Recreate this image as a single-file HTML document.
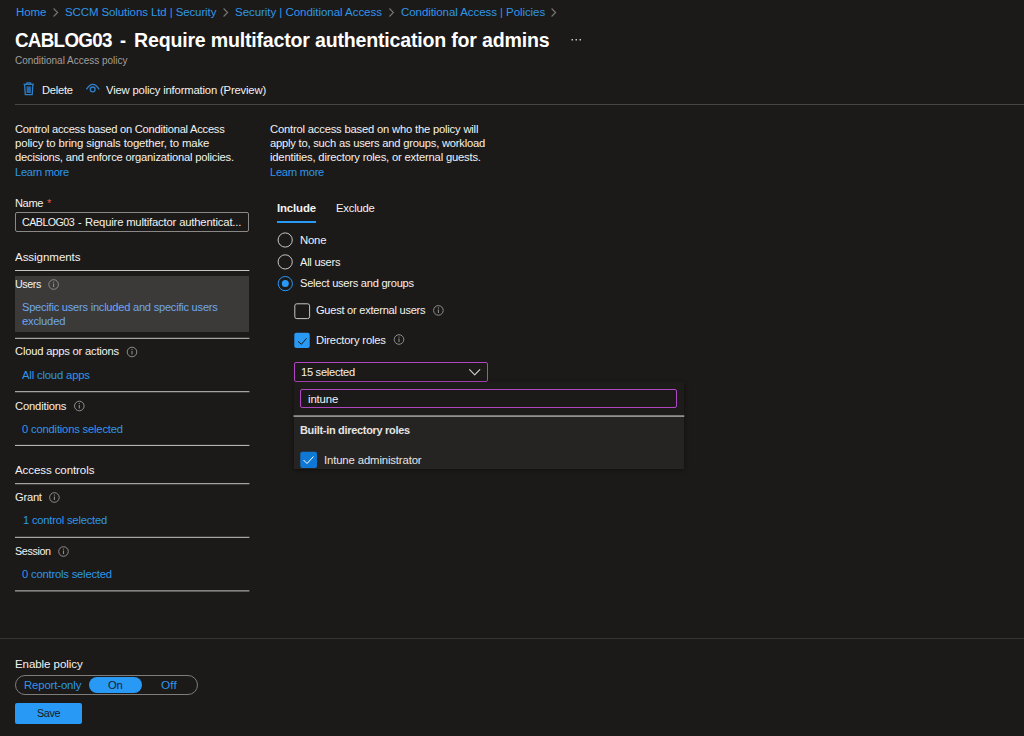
<!DOCTYPE html>
<html><head><meta charset="utf-8"><title>CABLOG03</title>
<style>
html,body{margin:0;padding:0;width:1024px;height:736px;overflow:hidden;background:#1b1a19;}
body{position:relative;font-family:"Liberation Sans",sans-serif;}
.t{position:absolute;white-space:nowrap;transform-origin:0 0;}
.a{position:absolute;box-sizing:border-box;}
svg{position:absolute;overflow:visible;}
</style></head><body>
<!-- breadcrumb chevrons -->
<svg style="left:0;top:0" width="1024" height="30">
<g fill="none" stroke="#7a7876" stroke-width="1.1">
<path d="M53.6 8.5 L57.6 12.5 L53.6 16.5"/>
<path d="M223.6 8.5 L227.6 12.5 L223.6 16.5"/>
<path d="M389.4 8.5 L393.4 12.5 L389.4 16.5"/>
<path d="M551.6 8.5 L555.6 12.5 L551.6 16.5"/>
</g>
<g fill="#c8c6c4"><rect x="571.5" y="39" width="1.5" height="1.5"/><rect x="575.5" y="39" width="1.5" height="1.5"/><rect x="579.5" y="39" width="1.5" height="1.5"/></g>
</svg>
<!-- toolbar icons -->
<svg style="left:0;top:0" width="120" height="110">
<g fill="none" stroke="#2f80c8" stroke-width="1.3" stroke-linejoin="round">
<path d="M23.5 84.3 H33.8"/>
<path d="M26.8 84 V82.9 H30.6 V84"/>
<path d="M24.6 84.5 L25.3 94.6 H32.2 L32.9 84.5"/>
</g>
<rect x="26.6" y="86.4" width="4.3" height="6.6" fill="#2868a8"/>
<g fill="none" stroke="#2f80c8" stroke-width="1.3">
<path d="M86.4 89.4 Q92.8 79.4 99.2 89.4"/>
<circle cx="92.7" cy="89.4" r="2.4"/>
</g>
</svg>
<div class="a" style="left:15px;top:104px;width:1009px;height:1px;background:#484644"></div>
<!-- name input -->
<div class="a" style="left:15px;top:212px;width:234px;height:20px;border:1px solid #8a8886;border-radius:2px"></div>
<span class="t" style="left:47px;top:197px;color:#e8584f;font-size:11px">*</span>
<!-- left list lines -->
<div class="a" style="left:15px;top:276px;width:234px;height:56px;background:#3b3a39"></div>
<svg style="left:0;top:0" width="260" height="600" shape-rendering="geometricPrecision"><g fill="#c8c6c4">
<rect x="15" y="270" width="234.4" height="1"/>
<rect x="15" y="337.8" width="234.4" height="1"/>
<rect x="15" y="391.2" width="234.4" height="1"/>
<rect x="15" y="444.9" width="234.4" height="1"/>
<rect x="15" y="483.2" width="234.4" height="1"/>
<rect x="15" y="536.8" width="234.4" height="1"/>
<rect x="15" y="590.4" width="234.4" height="1"/>
</g></svg>
<!-- info icons -->
<svg style="left:0;top:0" width="460" height="600">
<g fill="none" stroke="#8f8d8b" stroke-width="1">
<circle cx="53.6" cy="284.5" r="4.8"/>
<circle cx="132" cy="352" r="4.8"/>
<circle cx="79.3" cy="406" r="4.8"/>
<circle cx="54.4" cy="497.5" r="4.8"/>
<circle cx="63.5" cy="551.5" r="4.8"/>
<circle cx="438.4" cy="310.4" r="4.8"/>
<circle cx="399" cy="339.5" r="4.8"/>
</g>
<g stroke="#8f8d8b" stroke-width="1.1">
<path d="M53.6 283.5 V287"/><path d="M132 351 V354.5"/><path d="M79.3 405 V408.5"/><path d="M54.4 496.5 V500"/><path d="M63.5 550.5 V554"/><path d="M438.4 309.4 V312.9"/><path d="M399 338.5 V342"/>
</g>
<g fill="#a19f9d">
<circle cx="53.6" cy="282" r="0.6"/><circle cx="132" cy="349.5" r="0.6"/><circle cx="79.3" cy="403.5" r="0.6"/><circle cx="54.4" cy="495" r="0.6"/><circle cx="63.5" cy="549" r="0.6"/><circle cx="438.4" cy="307.9" r="0.6"/><circle cx="399" cy="337" r="0.6"/>
</g>
</svg>
<!-- bottom -->
<div class="a" style="left:0;top:638px;width:1024px;height:1px;background:#353433"></div>
<div class="a" style="left:15px;top:675px;width:183px;height:20px;border:1px solid #7f7d7b;border-radius:10px"></div>
<div class="a" style="left:89px;top:677px;width:52.5px;height:15.5px;background:#2899f5;border-radius:8px"></div>
<div class="a" style="left:15px;top:703px;width:67px;height:20.5px;background:#2899f5;border-radius:2px"></div>
<!-- right: tab underline -->
<div class="a" style="left:277px;top:220.5px;width:39px;height:2px;background:#2899f5"></div>
<!-- radios -->
<svg style="left:0;top:0" width="700" height="480">
<circle cx="285.2" cy="240" r="7.1" fill="none" stroke="#c8c6c4" stroke-width="1"/>
<circle cx="285.2" cy="261.9" r="7.1" fill="none" stroke="#c8c6c4" stroke-width="1"/>
<circle cx="285.3" cy="283.6" r="7.1" fill="none" stroke="#2899f5" stroke-width="1"/>
<circle cx="285.3" cy="283.6" r="3.5" fill="#2899f5"/>
<rect x="294.8" y="303.8" width="14.8" height="14.8" rx="2" fill="none" stroke="#c8c6c4" stroke-width="1"/>
<rect x="294.3" y="332.8" width="15.4" height="15.2" rx="2" fill="#2899f5"/>
<path d="M298 341.4 L301.4 344.3 L306.6 338.2" fill="none" stroke="#1b1a19" stroke-width="1"/>
</svg>
<!-- dropdown -->
<div class="a" style="left:293.5px;top:362.3px;width:194px;height:19.5px;border:1px solid #b146c2;border-radius:2px"></div>
<svg style="left:0;top:0" width="700" height="480">
<path d="M469.6 369.7 L474.7 374.8 L479.8 369.7" fill="none" stroke="#d2d0ce" stroke-width="1.15" stroke-linecap="round" stroke-linejoin="round"/>
</svg>
<div class="a" style="left:293.5px;top:382px;width:390.8px;height:86.5px;background:#1d1c1b;box-shadow:0 1px 4px rgba(0,0,0,0.45)"></div>
<div class="a" style="left:293.5px;top:417px;width:390.8px;height:51.5px;background:#252423"></div>
<svg style="left:0;top:0" width="700" height="480" shape-rendering="geometricPrecision"><rect x="293.5" y="415.3" width="390.8" height="1.6" fill="#a19f9d"/></svg>
<div class="a" style="left:300.3px;top:389.3px;width:377.2px;height:19.2px;border:1px solid #b146c2;border-radius:2px;background:#1b1a19"></div>
<svg style="left:0;top:0" width="700" height="480">
<rect x="300.3" y="451.7" width="16.7" height="16.3" rx="2" fill="#0f78d4"/>
<path d="M303.5 460 L307 463.5 L313.5 456.5" fill="none" stroke="#ffffff" stroke-width="1"/>
</svg>

<div class="t" style="left:15.5px;top:4.5px;font-size:11.7px;line-height:13.45px;font-weight:400;color:#2f96e8;letter-spacing:-0.111px;transform:scaleX(0.9856);">Home</div>
<div class="t" style="left:64.8px;top:4.5px;font-size:11.7px;line-height:13.45px;font-weight:400;color:#2f96e8;letter-spacing:-0.098px;transform:scaleX(0.9816);">SCCM Solutions Ltd | Security</div>
<div class="t" style="left:234.9px;top:4.5px;font-size:11.7px;line-height:13.45px;font-weight:400;color:#2f96e8;letter-spacing:-0.062px;transform:scaleX(0.9879);">Security | Conditional Access</div>
<div class="t" style="left:400.6px;top:4.5px;font-size:11.7px;line-height:13.45px;font-weight:400;color:#2f96e8;letter-spacing:-0.077px;transform:scaleX(0.9848);">Conditional Access | Policies</div>
<div class="t" style="left:14.5px;top:28.8px;font-size:20px;line-height:23.00px;font-weight:700;color:#ffffff;letter-spacing:-0.763px;transform:scaleX(0.9406);">CABLOG03</div>
<div class="t" style="left:120.4px;top:28.8px;font-size:20px;line-height:23.00px;font-weight:700;color:#ffffff;letter-spacing:-0.586px;transform:scaleX(0.9037);">-</div>
<div class="t" style="left:134.3px;top:28.8px;font-size:20px;line-height:23.00px;font-weight:700;color:#ffffff;letter-spacing:-0.200px;transform:scaleX(0.9788);">Require multifactor authentication for admins</div>
<div class="t" style="left:14.5px;top:55.4px;font-size:10px;line-height:11.50px;font-weight:400;color:#a19f9d;letter-spacing:-0.009px;transform:scaleX(0.9980);">Conditional Access policy</div>
<div class="t" style="left:42.3px;top:82.5px;font-size:11.7px;line-height:13.45px;font-weight:400;color:#f3f2f1;letter-spacing:-0.250px;transform:scaleX(0.9536);">Delete</div>
<div class="t" style="left:105.9px;top:82.5px;font-size:11.7px;line-height:13.45px;font-weight:400;color:#f3f2f1;letter-spacing:-0.181px;transform:scaleX(0.9641);">View policy information (Preview)</div>
<div class="t" style="left:15.1px;top:122.0px;font-size:11.7px;line-height:13.45px;font-weight:400;color:#f3f2f1;letter-spacing:-0.252px;transform:scaleX(0.9520);">Control access based on Conditional Access</div>
<div class="t" style="left:15.1px;top:136.2px;font-size:11.7px;line-height:13.45px;font-weight:400;color:#f3f2f1;letter-spacing:-0.134px;transform:scaleX(0.9725);">policy to bring signals together, to make</div>
<div class="t" style="left:15.1px;top:150.4px;font-size:11.7px;line-height:13.45px;font-weight:400;color:#f3f2f1;letter-spacing:-0.208px;transform:scaleX(0.9572);">decisions, and enforce organizational policies.</div>
<div class="t" style="left:15.1px;top:164.6px;font-size:11.7px;line-height:13.45px;font-weight:400;color:#2f96e8;letter-spacing:-0.294px;transform:scaleX(0.9483);">Learn more</div>
<div class="t" style="left:15.1px;top:195.5px;font-size:11.7px;line-height:13.45px;font-weight:400;color:#f3f2f1;letter-spacing:-0.398px;transform:scaleX(0.9461);">Name</div>
<div class="t" style="left:22.2px;top:215.2px;font-size:11.7px;line-height:13.45px;font-weight:400;color:#f3f2f1;letter-spacing:-0.595px;transform:scaleX(0.9164);">CABLOG03</div>
<div class="t" style="left:77.9px;top:215.2px;font-size:11.7px;line-height:13.45px;font-weight:400;color:#f3f2f1;letter-spacing:-0.203px;transform:scaleX(0.9451);">-</div>
<div class="t" style="left:84.9px;top:215.2px;font-size:11.7px;line-height:13.45px;font-weight:400;color:#f3f2f1;letter-spacing:-0.177px;transform:scaleX(0.9628);">Require multifactor authenticat...</div>
<div class="t" style="left:15.1px;top:249.5px;font-size:11.7px;line-height:13.45px;font-weight:400;color:#f3f2f1;letter-spacing:-0.065px;transform:scaleX(0.9893);">Assignments</div>
<div class="t" style="left:15.1px;top:276.7px;font-size:11.7px;line-height:13.45px;font-weight:400;color:#f3f2f1;letter-spacing:-0.463px;transform:scaleX(0.9179);">Users</div>
<div class="t" style="left:22.2px;top:299.8px;font-size:11.7px;line-height:13.45px;font-weight:400;color:#6ea6ee;letter-spacing:-0.247px;transform:scaleX(0.9497);">Specific users included and specific users</div>
<div class="t" style="left:22.2px;top:313.8px;font-size:11.7px;line-height:13.45px;font-weight:400;color:#6ea6ee;letter-spacing:-0.225px;transform:scaleX(0.9600);">excluded</div>
<div class="t" style="left:15.1px;top:344.2px;font-size:11.7px;line-height:13.45px;font-weight:400;color:#f3f2f1;letter-spacing:-0.215px;transform:scaleX(0.9583);">Cloud apps or actions</div>
<div class="t" style="left:22.2px;top:367.9px;font-size:11.7px;line-height:13.45px;font-weight:400;color:#2f96e8;letter-spacing:-0.178px;transform:scaleX(0.9646);">All cloud apps</div>
<div class="t" style="left:15.1px;top:398.5px;font-size:11.7px;line-height:13.45px;font-weight:400;color:#f3f2f1;letter-spacing:-0.197px;transform:scaleX(0.9631);">Conditions</div>
<div class="t" style="left:22.2px;top:421.5px;font-size:11.7px;line-height:13.45px;font-weight:400;color:#2f96e8;letter-spacing:-0.197px;transform:scaleX(0.9607);">0 conditions selected</div>
<div class="t" style="left:15.1px;top:462.8px;font-size:11.7px;line-height:13.45px;font-weight:400;color:#f3f2f1;letter-spacing:-0.085px;transform:scaleX(0.9842);">Access controls</div>
<div class="t" style="left:15.1px;top:489.7px;font-size:11.7px;line-height:13.45px;font-weight:400;color:#f3f2f1;letter-spacing:-0.253px;transform:scaleX(0.9547);">Grant</div>
<div class="t" style="left:23.3px;top:513.1px;font-size:11.7px;line-height:13.45px;font-weight:400;color:#2f96e8;letter-spacing:-0.211px;transform:scaleX(0.9567);">1 control selected</div>
<div class="t" style="left:15.1px;top:544.1px;font-size:11.7px;line-height:13.45px;font-weight:400;color:#f3f2f1;letter-spacing:-0.428px;transform:scaleX(0.9224);">Session</div>
<div class="t" style="left:22.2px;top:566.7px;font-size:11.7px;line-height:13.45px;font-weight:400;color:#2f96e8;letter-spacing:-0.199px;transform:scaleX(0.9597);">0 controls selected</div>
<div class="t" style="left:15.3px;top:656.5px;font-size:11.7px;line-height:13.45px;font-weight:400;color:#f3f2f1;letter-spacing:-0.074px;transform:scaleX(0.9859);">Enable policy</div>
<div class="t" style="left:24.1px;top:678.0px;font-size:11.7px;line-height:13.45px;font-weight:400;color:#2f96e8;letter-spacing:-0.146px;transform:scaleX(0.9726);">Report-only</div>
<div class="t" style="left:107.9px;top:678.0px;font-size:11.7px;line-height:13.45px;font-weight:400;color:#1b1a19;letter-spacing:-0.298px;transform:scaleX(0.9602);">On</div>
<div class="t" style="left:160.9px;top:678.0px;font-size:11.7px;line-height:13.45px;font-weight:400;color:#2f96e8;letter-spacing:0.071px;transform:scaleX(1.0136);">Off</div>
<div class="t" style="left:36.9px;top:705.5px;font-size:11.7px;line-height:13.45px;font-weight:400;color:#1b1a19;letter-spacing:-0.455px;transform:scaleX(0.9267);">Save</div>
<div class="t" style="left:270.1px;top:122.0px;font-size:11.7px;line-height:13.45px;font-weight:400;color:#f3f2f1;letter-spacing:-0.200px;transform:scaleX(0.9602);">Control access based on who the policy will</div>
<div class="t" style="left:270.1px;top:136.2px;font-size:11.7px;line-height:13.45px;font-weight:400;color:#f3f2f1;letter-spacing:-0.222px;transform:scaleX(0.9565);">apply to, such as users and groups, workload</div>
<div class="t" style="left:270.1px;top:150.4px;font-size:11.7px;line-height:13.45px;font-weight:400;color:#f3f2f1;letter-spacing:-0.186px;transform:scaleX(0.9593);">identities, directory roles, or external guests.</div>
<div class="t" style="left:270.1px;top:164.6px;font-size:11.7px;line-height:13.45px;font-weight:400;color:#2f96e8;letter-spacing:-0.289px;transform:scaleX(0.9492);">Learn more</div>
<div class="t" style="left:276.9px;top:201.3px;font-size:11.7px;line-height:13.45px;font-weight:700;color:#f3f2f1;letter-spacing:-0.144px;transform:scaleX(0.9747);">Include</div>
<div class="t" style="left:336.1px;top:201.3px;font-size:11.7px;line-height:13.45px;font-weight:400;color:#f3f2f1;letter-spacing:-0.214px;transform:scaleX(0.9627);">Exclude</div>
<div class="t" style="left:299.5px;top:233.0px;font-size:11.7px;line-height:13.45px;font-weight:400;color:#f3f2f1;letter-spacing:-0.207px;transform:scaleX(0.9695);">None</div>
<div class="t" style="left:299.5px;top:254.5px;font-size:11.7px;line-height:13.45px;font-weight:400;color:#f3f2f1;letter-spacing:-0.257px;transform:scaleX(0.9456);">All users</div>
<div class="t" style="left:299.5px;top:276.4px;font-size:11.7px;line-height:13.45px;font-weight:400;color:#f3f2f1;letter-spacing:-0.266px;transform:scaleX(0.9489);">Select users and groups</div>
<div class="t" style="left:316.1px;top:303.3px;font-size:11.7px;line-height:13.45px;font-weight:400;color:#f3f2f1;letter-spacing:-0.265px;transform:scaleX(0.9472);">Guest or external users</div>
<div class="t" style="left:316.1px;top:332.5px;font-size:11.7px;line-height:13.45px;font-weight:400;color:#f3f2f1;letter-spacing:-0.185px;transform:scaleX(0.9618);">Directory roles</div>
<div class="t" style="left:301.2px;top:364.7px;font-size:11.7px;line-height:13.45px;font-weight:400;color:#f3f2f1;letter-spacing:-0.272px;transform:scaleX(0.9473);">15 selected</div>
<div class="t" style="left:307.7px;top:391.6px;font-size:11.7px;line-height:13.45px;font-weight:400;color:#f3f2f1;letter-spacing:-0.138px;transform:scaleX(0.9733);">intune</div>
<div class="t" style="left:300.4px;top:422.6px;font-size:11.7px;line-height:13.45px;font-weight:700;color:#e6e4e2;letter-spacing:-0.310px;transform:scaleX(0.9364);">Built-in directory roles</div>
<div class="t" style="left:323.6px;top:452.5px;font-size:11.7px;line-height:13.45px;font-weight:400;color:#e6e4e2;letter-spacing:-0.145px;transform:scaleX(0.9711);">Intune administrator</div>
</body></html>
